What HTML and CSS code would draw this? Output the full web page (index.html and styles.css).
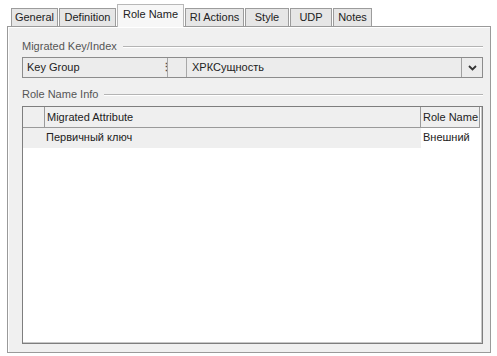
FILE: index.html
```html
<!DOCTYPE html>
<html lang="ru">
<head>
  <meta charset="UTF-8" />
  <title>Role Name</title>
  <link rel="stylesheet" href="styles.css">
</head>
<body>
  <!-- Вкладки -->
  <div class="tabs">
    <div class="tab">General</div>
    <div class="tab">Definition</div>
    <div class="tab active">Role Name</div>
    <div class="tab">RI Actions</div>
    <div class="tab">Style</div>
    <div class="tab">UDP</div>
    <div class="tab">Notes</div>
  </div>

  <div class="panel">
    <div class="group-title"><span>Migrated Key/Index</span><div class="rule"></div></div>
    <div class="combo">
      <div class="combo-key">Key Group</div>
      <div class="combo-grip">⋮</div>
      <div class="combo-blank"></div>
      <div class="combo-value">ХРКСущность</div>
      <div class="combo-btn">
        <svg width="9" height="6" viewBox="0 0 9 6"><path d="M1 1 L4.5 4.5 L8 1" fill="none" stroke="#333" stroke-width="1.8"/></svg>
      </div>
    </div>

    <div class="group-title second"><span>Role Name Info</span><div class="rule"></div></div>
    <div class="grid">
      <div class="grid-row head">
        <div class="cell corner"></div>
        <div class="cell attr">Migrated Attribute</div>
        <div class="cell role">Role Name</div>
      </div>
      <div class="grid-row data">
        <div class="cell corner"></div>
        <div class="cell attr">Первичный ключ</div>
        <div class="cell role">Внешний</div>
      </div>
    </div>
  </div>
</body>
</html>
```

FILE: styles.css
```css
* {
  box-sizing: border-box;
  margin: 0;
  padding: 0;
}

body {
  background: #fff;
  font-family: "Liberation Sans", Arial, sans-serif;
  font-size: 11px;
  color: #222;
  width: 497px;
  height: 356px;
  overflow: hidden;
}

.tabs {
  display: flex;
  align-items: flex-end;
  height: 26px;
  padding-left: 11px;
}

.tab {
  height: 18px;
  line-height: 16px;
  padding: 0 2px;
  text-align: center;
  white-space: nowrap;
  border: 1px solid #9c9c9c;
  border-bottom: none;
  background: #e6e6e6;
  margin-right: 1px;
  position: relative;
}

.tab:nth-child(1) { width: 47px; }
.tab:nth-child(2) { width: 57px; }
.tab:nth-child(4) { width: 59px; }
.tab:nth-child(5) { width: 44px; }
.tab:nth-child(6) { width: 42px; }
.tab:nth-child(7) { width: 39px; }

.tab.active {
  width: 67px;
  height: 23px;
  line-height: 18px;
  background: #f7f7f7;
  border-color: #b8b8b8;
  margin-bottom: -1px;
  z-index: 2;
}

.panel {
  margin: 0 6px 0 7px;
  height: 327px;
  border: 1px solid #9a9a9a;
  box-shadow: inset 1px 1px 0 #fff;
  background: #f0f0f0;
  padding: 12px 7px 0 14px;
}

.group-title {
  display: flex;
  align-items: center;
  height: 14px;
  color: #555;
}

.group-title .rule {
  flex: 1;
  margin: 1px 0 0 6px;
  border-top: 1px solid #b4b4b4;
  border-bottom: 1px solid #fff;
}

.group-title.second {
  margin-top: 9px;
}

.combo {
  display: flex;
  height: 21px;
  margin-top: 4px;
  border: 1px solid #8c8c8c;
  background: #ececec;
}

.combo-key {
  width: 138px;
  padding-left: 4px;
  line-height: 19px;
}

.combo-grip {
  width: 6px;
  line-height: 18px;
  font-weight: bold;
  color: #555;
}

.combo-blank {
  width: 20px;
  border-left: 1px solid #a8a8a8;
  border-right: 1px solid #a8a8a8;
}

.combo-value {
  flex: 1;
  padding-left: 5px;
  line-height: 19px;
}

.combo-btn {
  width: 21px;
  border-left: 1px solid #a0a0a0;
  display: flex;
  align-items: center;
  justify-content: center;
}

.grid {
  margin-top: 5px;
  width: 461px;
  height: 238px;
  border: 1px solid #7e7e7e;
  box-shadow: inset -1px -1px 0 #c8c8c8;
  background: #fff;
}

.grid-row {
  display: flex;
  height: 21px;
}

.grid-row.head .cell {
  background: #efefef;
  border-right: 1px solid #9a9a9a;
  border-bottom: 1px solid #9a9a9a;
  line-height: 20px;
}

.grid-row.data {
  height: 20px;
}

.grid-row.data .cell {
  line-height: 19px;
  background: #efefef;
}

.grid-row.data .cell.role {
  background: #fff;
}

.cell {
  padding-left: 2px;
  white-space: nowrap;
}

.cell.corner { width: 22px; }
.cell.attr { width: 376px; }
.cell.role { width: 59px; }

.grid-row.data .cell.attr {
  padding-left: 1px;
}
```
